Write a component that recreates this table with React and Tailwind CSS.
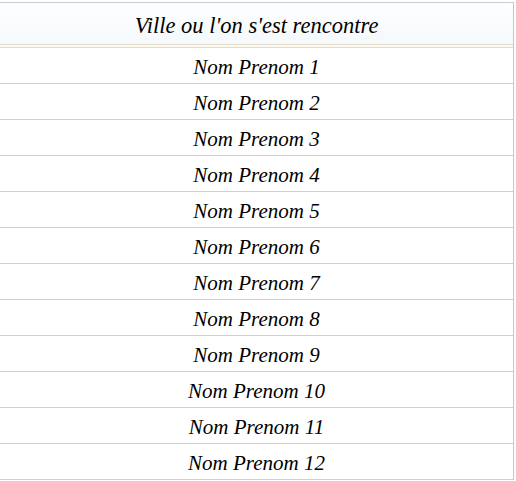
import React from 'react';

const names = Array.from({ length: 12 }, (_, i) => `Nom Prenom ${i + 1}`);

export default function App() {
  return (
    <main className="bg-white min-h-screen pt-[2px] font-['Liberation_Serif',serif] italic text-black">
      <div className="w-[514px] border-r border-[#c6c6c6]">
        {/* header */}
        <div className="h-[42px] border-t border-[#cccccc] bg-gradient-to-b from-[#fdfeff] to-[#f5f9fc] flex items-center justify-center text-[22.5px] pt-[4px]">
          Ville ou l'on s'est rencontre
        </div>
        <div className="h-px bg-[#e2dcc8]" />
        <div className="h-[2px] bg-[#fbf9f1]" />
        <div className="h-px bg-[#e2dcc8]" />

        {names.map((n) => (
          <div
            key={n}
            className="h-[36px] border-b border-[#d0d0d0] flex items-center justify-center text-[21px] pt-[5px]"
          >
            {n}
          </div>
        ))}
      </div>
    </main>
  );
}
